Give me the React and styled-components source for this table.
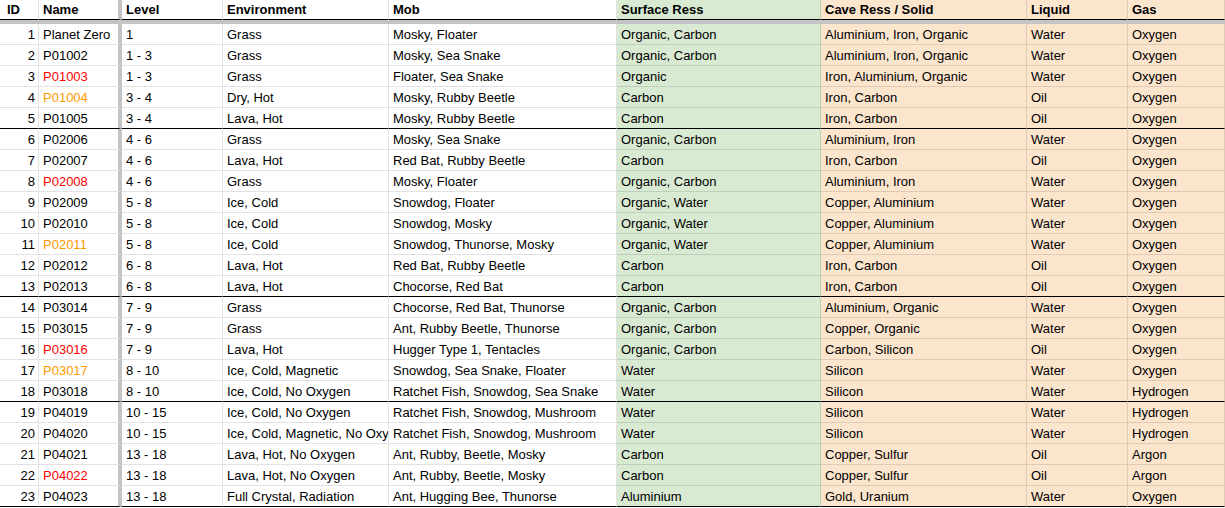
import React from "react";
import styled, { createGlobalStyle } from "styled-components";

const GlobalStyle = createGlobalStyle`
  html, body {
    margin: 0;
    padding: 0;
    background: #ffffff;
  }
  body {
    font-family: "Liberation Sans", Arial, sans-serif;
    font-size: 13px;
    color: #000000;
  }
`;

const GRID = "rgba(0, 0, 0, 0.115)";
const FROZEN = "#c4c4c4";
const COLUMNS = "39px 83px 101px 166px 228px 204px 206px 101px 1fr";

const GREEN = "#d9ead3";
const ORANGE = "#fce5cd";

const Sheet = styled.div`
  width: 1225px;
  height: 508px;
  overflow: hidden;
  background: #ffffff;
`;

const HeaderRow = styled.div`
  display: grid;
  grid-template-columns: ${COLUMNS};
  border-bottom: 4px solid ${FROZEN};
`;

const Row = styled.div`
  display: grid;
  grid-template-columns: ${COLUMNS};
  height: 21px;
`;

const Cell = styled.div`
  box-sizing: border-box;
  height: ${(p) => (p.$head ? "20px" : "21px")};
  line-height: 20px;
  padding: ${(p) => (p.$head ? 0 : 1)}px 3px 0 ${(p) => p.$padLeft || 4}px;
  white-space: nowrap;
  overflow: hidden;
  text-align: ${(p) => p.$align || "left"};
  font-weight: ${(p) => (p.$head ? 700 : 400)};
  color: ${(p) => p.$color || "#000000"};
  background: ${(p) => p.$bg || "#ffffff"};
  border-right: ${(p) => (p.$frozen ? `4px solid ${FROZEN}` : `1px solid ${GRID}`)};
  border-bottom: 1px solid ${(p) => (p.$thick ? "#000000" : GRID)};
`;

const RED = "#ff0000";
const AMBER = "#ff9900";

const headers = [
  "ID",
  "Name",
  "Level",
  "Environment",
  "Mob",
  "Surface Ress",
  "Cave Ress / Solid",
  "Liquid",
  "Gas",
];

const fills = [null, null, null, null, null, GREEN, ORANGE, ORANGE, ORANGE];

const planets = [
  [1, "Planet Zero", null, "1", "Grass", "Mosky, Floater", "Organic, Carbon", "Aluminium, Iron, Organic", "Water", "Oxygen"],
  [2, "P01002", null, "1 - 3", "Grass", "Mosky, Sea Snake", "Organic, Carbon", "Aluminium, Iron, Organic", "Water", "Oxygen"],
  [3, "P01003", RED, "1 - 3", "Grass", "Floater, Sea Snake", "Organic", "Iron, Aluminium, Organic", "Water", "Oxygen"],
  [4, "P01004", AMBER, "3 - 4", "Dry, Hot", "Mosky, Rubby Beetle", "Carbon", "Iron, Carbon", "Oil", "Oxygen"],
  [5, "P01005", null, "3 - 4", "Lava, Hot", "Mosky, Rubby Beetle", "Carbon", "Iron, Carbon", "Oil", "Oxygen", true],
  [6, "P02006", null, "4 - 6", "Grass", "Mosky, Sea Snake", "Organic, Carbon", "Aluminium, Iron", "Water", "Oxygen"],
  [7, "P02007", null, "4 - 6", "Lava, Hot", "Red Bat, Rubby Beetle", "Carbon", "Iron, Carbon", "Oil", "Oxygen"],
  [8, "P02008", RED, "4 - 6", "Grass", "Mosky, Floater", "Organic, Carbon", "Aluminium, Iron", "Water", "Oxygen"],
  [9, "P02009", null, "5 - 8", "Ice, Cold", "Snowdog, Floater", "Organic, Water", "Copper, Aluminium", "Water", "Oxygen"],
  [10, "P02010", null, "5 - 8", "Ice, Cold", "Snowdog, Mosky", "Organic, Water", "Copper, Aluminium", "Water", "Oxygen"],
  [11, "P02011", AMBER, "5 - 8", "Ice, Cold", "Snowdog, Thunorse, Mosky", "Organic, Water", "Copper, Aluminium", "Water", "Oxygen"],
  [12, "P02012", null, "6 - 8", "Lava, Hot", "Red Bat, Rubby Beetle", "Carbon", "Iron, Carbon", "Oil", "Oxygen"],
  [13, "P02013", null, "6 - 8", "Lava, Hot", "Chocorse, Red Bat", "Carbon", "Iron, Carbon", "Oil", "Oxygen", true],
  [14, "P03014", null, "7 - 9", "Grass", "Chocorse, Red Bat, Thunorse", "Organic, Carbon", "Aluminium, Organic", "Water", "Oxygen"],
  [15, "P03015", null, "7 - 9", "Grass", "Ant, Rubby Beetle, Thunorse", "Organic, Carbon", "Copper, Organic", "Water", "Oxygen"],
  [16, "P03016", RED, "7 - 9", "Lava, Hot", "Hugger Type 1, Tentacles", "Organic, Carbon", "Carbon, Silicon", "Oil", "Oxygen"],
  [17, "P03017", AMBER, "8 - 10", "Ice, Cold, Magnetic", "Snowdog, Sea Snake, Floater", "Water", "Silicon", "Water", "Oxygen"],
  [18, "P03018", null, "8 - 10", "Ice, Cold, No Oxygen", "Ratchet Fish, Snowdog, Sea Snake", "Water", "Silicon", "Water", "Hydrogen", true],
  [19, "P04019", null, "10 - 15", "Ice, Cold, No Oxygen", "Ratchet Fish, Snowdog, Mushroom", "Water", "Silicon", "Water", "Hydrogen"],
  [20, "P04020", null, "10 - 15", "Ice, Cold, Magnetic, No Oxygen", "Ratchet Fish, Snowdog, Mushroom", "Water", "Silicon", "Water", "Hydrogen"],
  [21, "P04021", null, "13 - 18", "Lava, Hot, No Oxygen", "Ant, Rubby, Beetle, Mosky", "Carbon", "Copper, Sulfur", "Oil", "Argon"],
  [22, "P04022", RED, "13 - 18", "Lava, Hot, No Oxygen", "Ant, Rubby, Beetle, Mosky", "Carbon", "Copper, Sulfur", "Oil", "Argon"],
  [23, "P04023", null, "13 - 18", "Full Crystal, Radiation", "Ant, Hugging Bee, Thunorse", "Aluminium", "Gold, Uranium", "Water", "Oxygen", true],
];

export default function App() {
  return (
    <>
      <GlobalStyle />
      <Sheet>
        <HeaderRow>
          {headers.map((h, i) => (
            <Cell
              key={h}
              $head
              $thick
              $frozen={i === 1}
              $bg={fills[i]}
              $padLeft={i === 0 ? 7 : 4}
            >
              {h}
            </Cell>
          ))}
        </HeaderRow>
        {planets.map(([id, name, color, ...rest]) => {
          const thick = rest[7] === true;
          const values = rest.slice(0, 7);
          return (
            <Row key={id}>
              <Cell $align="right" $thick={thick}>
                {id}
              </Cell>
              <Cell $frozen $color={color} $thick={thick}>
                {name}
              </Cell>
              {values.map((v, i) => (
                <Cell key={i} $bg={fills[i + 2]} $thick={thick}>
                  {v}
                </Cell>
              ))}
            </Row>
          );
        })}
      </Sheet>
    </>
  );
}
